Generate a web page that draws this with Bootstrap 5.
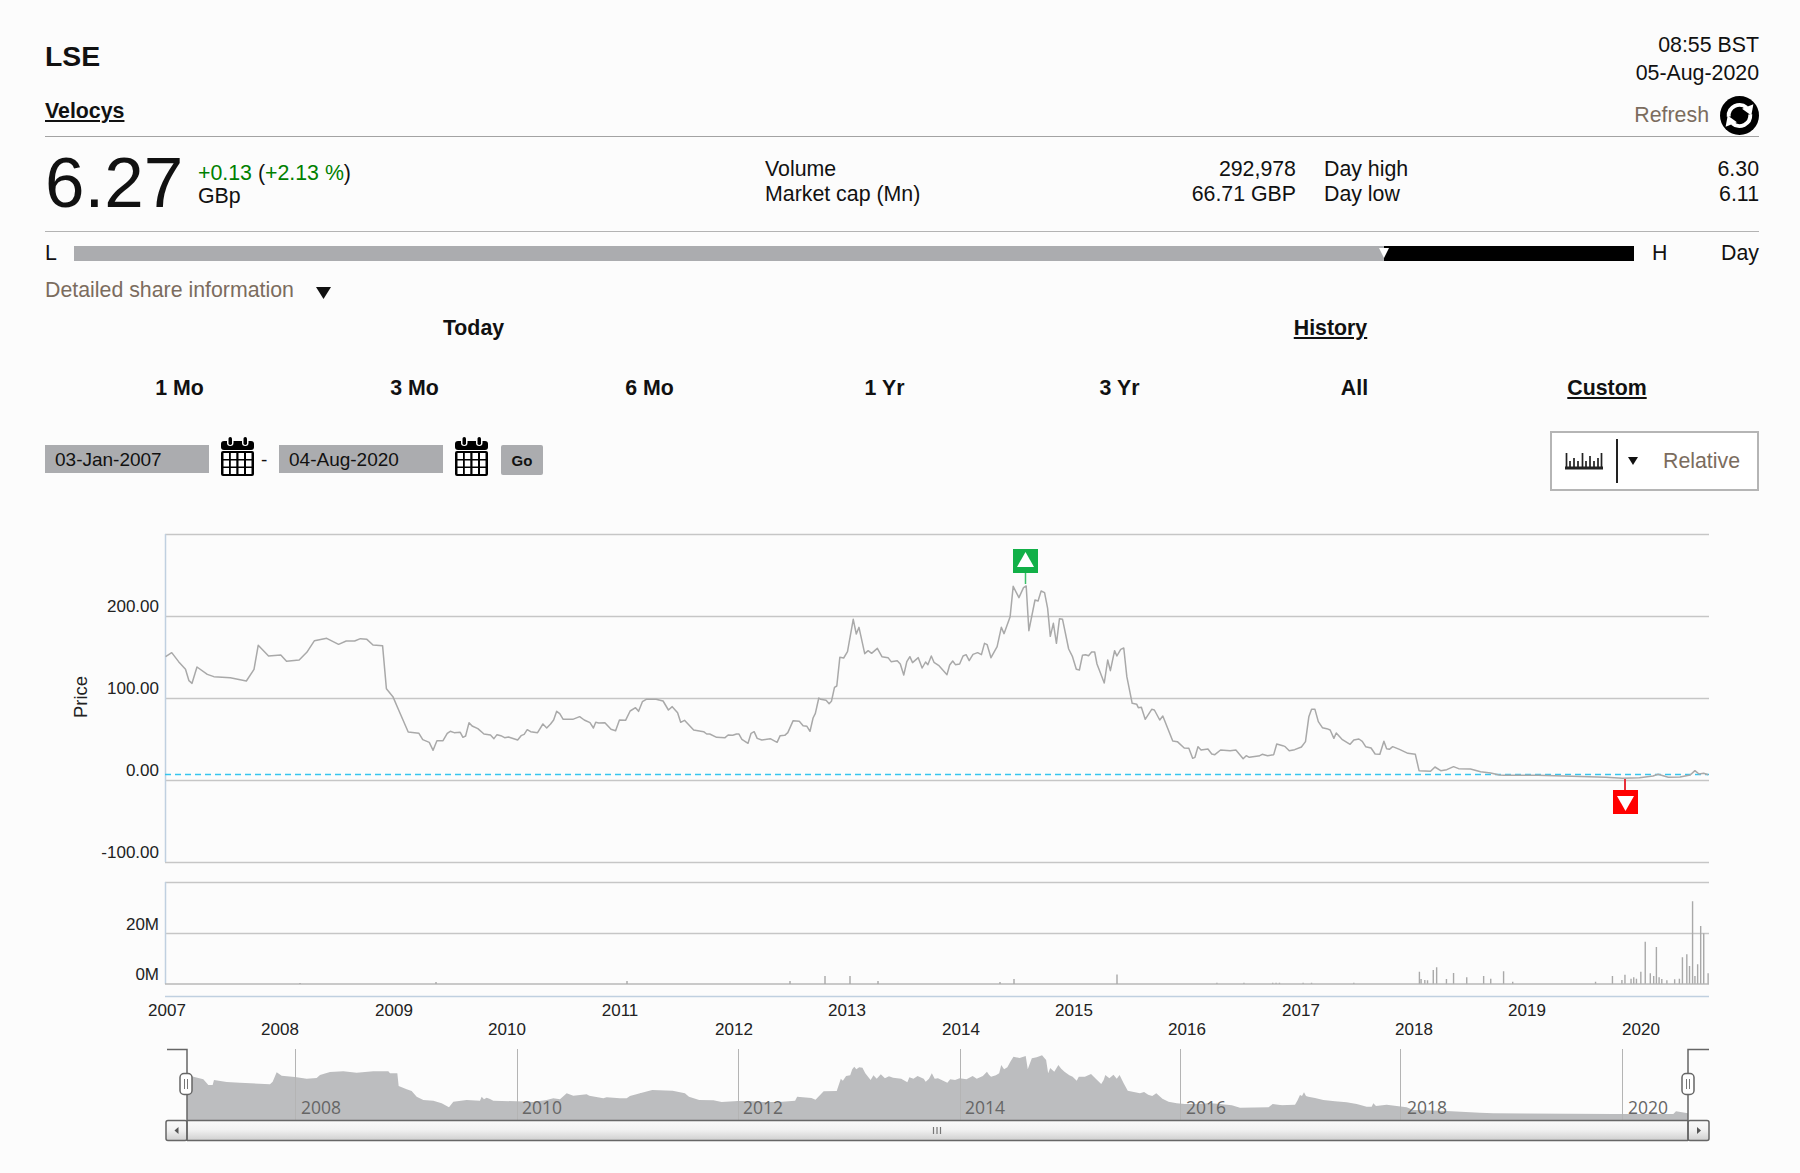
<!DOCTYPE html>
<html lang="en">
<head>
<meta charset="utf-8">
<title>LSE Velocys</title>
<link href="https://cdn.jsdelivr.net/npm/bootstrap@5.3.0/dist/css/bootstrap.min.css" rel="stylesheet">
<style>
html,body{background:#fcfcfc;}
body{font-family:"Liberation Sans",Arial,sans-serif;font-size:21.33px;color:#111;line-height:28px;overflow:hidden;}
a{color:#111;}
.sheet{width:1800px;height:1173px;padding:0 41px 0 45px;}
.headbar{height:137px;border-bottom:1px solid #a3a3a3;padding-top:31px;}
.exch{font-size:28.4px;font-weight:700;line-height:32px;margin-top:9px;}
.coname{font-weight:700;margin-top:25px;text-decoration:underline;}
.brown{color:#7b6c5e;}
.refresh{height:38px;margin-top:9px;gap:11px;}
.quote{height:95px;border-bottom:1px solid #b3b3b3;}
.bigp{font-size:71px;line-height:71px;letter-spacing:0;margin-top:10px;width:153px;}
.chg{padding-top:25px;line-height:23px;width:567px;}
.up{color:#008000;}
.lab{width:531px;padding-top:20px;line-height:25px;}
.lab2{width:435px;margin-left:28px;padding-top:20px;line-height:25px;}
.rangebar{height:28px;margin-top:7px;}
.lcol{width:29px;}
.track{width:1560px;height:15px;background:#abacaf;position:relative;}
.fillb{position:absolute;right:0;top:0;bottom:0;width:250px;background:#000;}
.marker{position:absolute;right:245px;top:2px;width:10px;height:10px;}
.hcol{margin-left:18px;}
.detail{margin-top:9px;height:28px;}
.detail svg{margin-left:22px;margin-top:5px;}
.tabs1{margin-top:10px;height:28px;font-weight:700;}
.tabs2{margin-top:32px;height:28px;font-weight:700;margin-left:17px;display:grid;grid-template-columns:repeat(6,235px) 270px;}
.dates{margin-top:29px;height:59px;}
.fldd{width:164px;height:28px;background:#abacaf;padding-left:10px;font-size:19px;line-height:30px;margin-top:14px;}
.calg{margin:6px 0 0 12px;}
.dashs{width:25px;padding-left:7px;margin-top:15px;font-size:19px;}
.gob{width:42px;height:30px;margin:14px 0 0 13px;background:#abacaf;border-radius:2px;font-size:15px;font-weight:700;text-align:center;line-height:31px;}
.relbox{width:209px;height:60px;border:2px solid #b5b5b5;background:#fff;}
.relbox .tick{margin-left:13px;}
.relbox .sep{width:2px;height:44px;background:#222;margin-left:13px;}
.relbox .tri{margin-left:10px;}
.relbox .reltxt{margin-left:25px;}
.chartwrap{margin-top:10px;}
.chartwrap svg{display:block;}
.chartwrap text{font-family:"Liberation Sans",Arial,sans-serif;font-size:17px;fill:#222;}
.chartwrap text.nv{font-family:"Open Sans",sans-serif;font-size:17.5px;fill:#666;}
.pline{fill:none;stroke:#a9a9a9;stroke-width:1.5;stroke-linejoin:round;}
.pline,.barz{vector-effect:non-scaling-stroke;}
.barz{fill:none;stroke:#a9a9a9;stroke-width:1.4;}
.navfill{fill:#bcbdbf;}
.gridl{stroke:#c6c6c6;stroke-width:1.5;fill:none;}
.axisl{stroke:#c0d0e0;stroke-width:1.5;fill:none;}
.navg{stroke:#b4b4b4;stroke-width:1;fill:none;}
.navb{stroke:#666;stroke-width:1.5;fill:none;}
</style>
</head>
<body>
<div class="sheet">
  <div class="headbar d-flex justify-content-between">
    <div>
      <div class="exch">LSE</div>
      <div class="coname">Velocys</div>
    </div>
    <div class="text-end">
      <div>08:55 BST</div>
      <div>05-Aug-2020</div>
      <div class="refresh d-flex justify-content-end align-items-center">
        <span class="brown">Refresh</span>
        <svg width="39" height="39" viewBox="0 0 38 38" aria-hidden="true">
          <circle cx="19" cy="19" r="19" fill="#000"/>
          <path d="M8.5 20A10.5 10.5 0 0 1 26 11.500" fill="none" stroke="#fff" stroke-width="3.800"/>
          <path d="M32.500 8L30.500 19 21.500 12.500Z" fill="#fff"/>
          <path d="M29.5 18A10.5 10.5 0 0 1 12 26.500" fill="none" stroke="#fff" stroke-width="3.800"/>
          <path d="M5.500 30L7.500 19 16.500 25.500Z" fill="#fff"/>
        </svg>
      </div>
    </div>
  </div>

  <div class="quote d-flex">
    <div class="bigp">6.27</div>
    <div class="chg"><span class="up">+0.13</span> (<span class="up">+2.13 %</span>)<br>GBp</div>
    <div class="lab d-flex justify-content-between">
      <div>Volume<br>Market cap (Mn)</div>
      <div class="text-end">292,978<br>66.71 GBP</div>
    </div>
    <div class="lab2 d-flex justify-content-between">
      <div>Day high<br>Day low</div>
      <div class="text-end">6.30<br>6.11</div>
    </div>
  </div>

  <div class="rangebar d-flex align-items-center">
    <div class="lcol">L</div>
    <div class="track">
      <div class="fillb"></div>
      <svg class="marker" viewBox="0 0 10 10" aria-hidden="true"><path d="M0 0H10L5 10Z" fill="#fff"/></svg>
    </div>
    <div class="hcol">H</div>
    <div class="ms-auto">Day</div>
  </div>

  <div class="detail d-flex align-items-center">
    <span class="brown">Detailed share information</span>
    <svg width="15" height="12" viewBox="0 0 15 12" aria-hidden="true"><path d="M0 0H15L7.500 12Z" fill="#111"/></svg>
  </div>

  <div class="tabs1 row g-0 text-center">
    <div class="col-6">Today</div>
    <div class="col-6"><u>History</u></div>
  </div>
  <div class="tabs2 text-center">
    <div>1 Mo</div><div>3 Mo</div><div>6 Mo</div><div>1 Yr</div><div>3 Yr</div><div>All</div><div><u>Custom</u></div>
  </div>

  <div class="dates d-flex">
    <div class="fldd">03-Jan-2007</div>
    <svg class="calg" width="33" height="39" viewBox="0 0 33 39" aria-hidden="true">
      <use href="#calshape"/>
    </svg>
    <div class="dashs">-</div>
    <div class="fldd">04-Aug-2020</div>
    <svg class="calg" width="33" height="39" viewBox="0 0 33 39" aria-hidden="true">
      <g id="calshape">
        <rect x="0" y="4" width="33" height="9" rx="3" fill="#000"/>
        <rect x="0" y="14" width="33" height="25" rx="2" fill="#000"/>
        <rect x="6" y="-1" width="6.500" height="10" rx="3.200" fill="#fff"/>
        <rect x="21" y="-1" width="6.500" height="10" rx="3.200" fill="#fff"/>
        <rect x="7.500" y="0" width="3.500" height="8" rx="1.700" fill="#000"/>
        <rect x="22.500" y="0" width="3.500" height="8" rx="1.700" fill="#000"/>
        <path fill="#fff" d="M2.500 16h5.500v6H2.500zM9.800 16h5.500v6h-5.500zM17.500 16h5.500v6h-5.500zM25 16h5.500v6h-5.500zM2.500 23.500h5.500v6H2.500zM9.800 23.500h5.500v6h-5.500zM17.500 23.500h5.500v6h-5.500zM25 23.500h5.500v6h-5.500zM2.500 31h5.500v6H2.500zM9.800 31h5.500v6h-5.500zM17.500 31h5.500v6h-5.500zM25 31h5.500v6h-5.500z"/>
      </g>
    </svg>
    <div class="gob">Go</div>
    <div class="relbox ms-auto d-flex align-items-center">
      <svg class="tick" width="38" height="18" viewBox="0 0 38 18" aria-hidden="true">
        <path d="M0 16H38" stroke="#222" stroke-width="3"/>
        <path d="M1.500 16V1M5 16V9M9 16V6M13 16V9M17.500 16V1M21 16V9M25 16V4M29 16V9M33 16V6M36.500 16V1" stroke="#222" stroke-width="1.700" fill="none"/>
      </svg>
      <div class="sep"></div>
      <svg class="tri" width="10" height="8" viewBox="0 0 10 8" aria-hidden="true"><path d="M0 0H10L5 8Z" fill="#111"/></svg>
      <span class="brown reltxt">Relative</span>
    </div>
  </div>

  <div class="chartwrap">
    <svg width="1714" height="673" viewBox="45 500 1714 673" role="img" aria-label="Price chart">
      <defs>
        <linearGradient id="trackg" x1="0" y1="0" x2="0" y2="1"><stop offset="0" stop-color="#fafafa"/><stop offset="0.45" stop-color="#f2f2f2"/><stop offset="1" stop-color="#cfcfcf"/></linearGradient>
      </defs>
      <!-- price panel -->
      <path class="gridl" d="M165 534.500H1709M165 616.500H1709M165 698.500H1709M165 780.500H1709M165 862.500H1709"/>
      <path class="axisl" d="M165.500 534V862"/>
      <path d="M165 774.500H1709" stroke="#35c5ee" stroke-width="1.300" stroke-dasharray="6 4" fill="none"/>
      <g transform="translate(60,520) scale(.38265,.33333)">
        <polyline class="pline" points="276,410 292,398 310,425 328,448 337,482 345,490 358,441 385,463 402,470 445,473 487,483 507,448 518,376 545,408 577,405 592,424 625,420 645,397 665,362 697,355 728,373 748,363 770,363 785,356 802,358 818,375 843,377 853,506 870,530 885,570 910,636 938,640 948,659 965,667 975,691 985,662 1001,662 1012,640 1020,634 1030,638 1046,637 1053,652 1060,648 1069,608 1077,618 1092,626 1108,642 1125,645 1134,656 1142,644 1152,647 1162,653 1172,651 1196,660 1205,647 1213,643 1221,629 1230,635 1248,638 1262,612 1272,624 1282,612 1290,600 1298,574 1306,581 1315,598 1340,598 1358,590 1370,600 1385,608 1394,624 1400,607 1408,609 1424,608 1440,628 1452,632 1462,600 1478,601 1490,573 1504,563 1512,574 1522,545 1532,538 1558,538 1568,541"/>
      </g>
      <g transform="translate(660,520) scale(.38265,.33333)">
        <polyline class="pline" points="0,541 8,543 22,570 32,560 46,578 54,607 64,601 88,630 114,635 122,642 130,642 148,652 170,653 178,645 190,646 200,642 206,642 214,658 230,670 238,640 246,635 254,655 266,660 288,656 306,667 314,647 326,646 334,638 348,602 364,604 374,617 384,619 392,634 400,594 406,580 415,534 420,538 434,541 442,551 448,544 456,502 462,498 470,412 480,414 490,395 505,298 513,342 520,322 535,401 544,392 553,400 568,385 580,410 596,413 604,425 620,422 628,432 637,465 645,425 653,410 660,428 675,413 685,444 694,426 700,434 709,408 716,427 728,436 750,464 757,435 765,423 772,434 783,432 792,408 800,404 808,422 818,403 830,398 840,404 848,370 855,374 865,413 881,380 892,322 899,341 915,290 923,199 938,233 950,203 957,198 964,332 980,240 988,243 996,213 1005,218 1013,265 1020,349 1028,310 1036,370 1044,296 1052,298 1068,387 1078,410 1088,448 1096,450 1104,406 1112,404 1120,407 1128,396 1136,396 1142,432 1161,489 1170,420 1177,452 1188,392 1194,408 1204,388 1212,384 1220,470 1234,550 1246,553 1250,563 1258,562 1268,598 1285,568 1292,570 1306,600 1314,588 1340,663 1352,665 1370,684 1382,685 1392,715 1398,712 1406,680 1414,690 1432,687 1442,702 1450,704 1465,690 1490,692 1505,690 1524,716 1532,707 1540,712 1568,707"/>
      </g>
      <g transform="translate(1200,680) scale(.33807,.33333)">
        <polyline class="pline" points="177,227 184,223 200,227 218,224 227,192 245,197 252,200 264,212 280,209 300,201 312,185 322,110 330,88 340,88 350,125 362,143 375,146 385,150 396,175 403,159 420,178 444,193 455,180 470,177 480,184 490,200 506,204 518,222 532,223 544,184 552,206 560,208 570,200 590,208 615,220 637,223 648,272 682,274 695,261 712,272 730,269 750,260 765,266 800,267 830,275 860,279 885,285 900,286 1000,286 1100,289 1200,292 1250,295 1300,293 1340,288 1355,283 1385,292 1420,291 1450,285 1464,272 1476,282 1490,280 1503,284"/>
      </g>
      <!-- flags -->
      <path d="M1025.500 573V584" stroke="#3cc06a" stroke-width="1.500"/>
      <rect x="1013" y="549" width="25" height="24" fill="#12b048"/>
      <path d="M1025.500 552L1034 567H1017Z" fill="#fff"/>
      <path d="M1625 779V790" stroke="#e8303a" stroke-width="2"/>
      <rect x="1613" y="790" width="25" height="24" fill="#ff0000"/>
      <path d="M1625.500 811L1634 796H1617Z" fill="#fff"/>
      <!-- axis labels -->
      <g text-anchor="end">
        <text x="159" y="612">200.00</text>
        <text x="159" y="694">100.00</text>
        <text x="159" y="776">0.00</text>
        <text x="159" y="858">-100.00</text>
        <text x="159" y="930">20M</text>
        <text x="159" y="980">0M</text>
      </g>
      <text x="87" y="697" text-anchor="middle" transform="rotate(-90 87 697)" style="font-size:18.500px">Price</text>
      <!-- volume panel -->
      <path class="gridl" d="M165 882.500H1709M165 933.500H1709"/>
      <path class="axisl" d="M165.500 882V984"/>
      <path d="M165 984H1709" stroke="#b9b9b9" stroke-width="1.500"/>
      <path d="M165 996.500H1709" stroke="#c0d0e0" stroke-width="1.500"/>
      <path class="barz" d="M825 984V976M850 984V976M878 984V981M790 984V981M627 984V981M1014 984V979M1117 984V974.500M436 984V982M300 984V983M1000 984V982"/>
      <g transform="translate(1200,680) scale(.33807,.33333)">
        <path class="barz" d="M649 911V875M654 911V897M665 911V900M673 911V901M690 911V870M700 911V862M729 911V897M750 911V879M789 911V892M839 911V888M860 911V896M898 911V874M925 911V905M1220 911V888M1248 911V900M1257 911V884M1275 911V896M1283 911V892M1291 911V896M1304 911V875M1317 911V785M1332 911V880M1342 911V888M1350 911V801M1358 911V892M1366 911V897M1381 911V901M1404 911V898M1418 911V896M1427 911V832M1440 911V823M1448 911V858M1457 911V664M1464 911V888M1472 911V853M1481 911V738M1490 911V760M1503 911V880M50 911V908M130 911V908M215 911V908M225 911V908M235 911V908M305 911V908M330 911V908M455 911V908M1170 911V905"/>
      </g>
      <!-- x labels -->
      <g text-anchor="middle">
        <text x="167" y="1016">2007</text><text x="394" y="1016">2009</text><text x="620" y="1016">2011</text><text x="847" y="1016">2013</text><text x="1074" y="1016">2015</text><text x="1301" y="1016">2017</text><text x="1527" y="1016">2019</text>
        <text x="280" y="1035">2008</text><text x="507" y="1035">2010</text><text x="734" y="1035">2012</text><text x="961" y="1035">2014</text><text x="1187" y="1035">2016</text><text x="1414" y="1035">2018</text><text x="1641" y="1035">2020</text>
      </g>
      <!-- navigator -->
      <g transform="translate(140,1030) scale(.33333)">
        <polygon class="navfill" points="141,270 141,130 146,132 160,140 190,148 205,165 218,165 222,150 260,156 300,158 390,163 398,155 410,127 425,137 465,141 500,146 530,144 540,135 570,126 610,124 650,128 700,124 745,124 750,130 772,130 776,168 800,178 815,183 830,200 850,210 880,212 905,220 927,232 940,215 980,210 1020,212 1025,200 1032,208 1040,203 1050,207 1060,212 1130,214 1180,216 1220,210 1240,205 1260,208 1280,190 1300,197 1340,193 1348,197 1390,205 1400,202 1440,205 1460,205 1470,198 1500,190 1505,190 1505,270"/>
      </g>
      <g transform="translate(640,1030) scale(.40816,.33333)">
        <polygon class="navfill" points="0,270 0,190 30,180 80,182 110,190 120,200 145,210 180,211 200,216 240,213 270,213 300,216 340,216 380,212 385,200 420,204 430,209 450,184 482,183 492,146 497,152 505,138 515,136 520,118 525,110 530,118 537,112 545,113 552,130 565,150 572,136 580,146 590,133 600,145 610,139 620,143 640,146 655,157 660,142 670,146 680,138 695,146 700,155 708,146 715,130 722,146 730,145 753,158 760,148 772,150 783,145 800,148 815,138 825,146 840,138 850,125 855,134 860,140 872,136 880,130 885,105 892,118 900,112 908,94 915,80 930,84 945,78 950,118 960,85 972,82 985,76 995,90 1000,130 1005,114 1015,125 1025,105 1032,116 1040,125 1052,136 1060,140 1070,152 1075,140 1090,140 1105,132 1118,148 1130,162 1136,150 1140,135 1150,145 1160,134 1168,146 1175,135 1185,160 1195,182 1210,186 1225,190 1235,186 1245,194 1255,198 1265,190 1280,206 1295,215 1315,220 1335,222 1360,222 1400,220 1450,226 1470,233 1540,232 1550,222 1568,225 1572,226 1572,270"/>
      </g>
      <g transform="translate(1280,1030) scale(.33333)">
        <polygon class="navfill" points="0,270 0,226 45,224 52,212 60,195 66,198 72,187 78,198 85,200 105,204 130,210 165,214 200,217 230,222 260,230 275,230 280,220 288,228 320,224 380,232 400,240 500,243 600,248 640,250 1000,252 1180,252 1188,244 1224,250 1224,270"/>
      </g>
      <path class="navg" d="M295.500 1049V1120M517.500 1049V1120M738.500 1049V1120M960.500 1049V1120M1180.500 1049V1120M1400.500 1049V1120M1622.500 1049V1120"/>
      <g>
        <text class="nv" x="301" y="1114">2008</text><text class="nv" x="522" y="1114">2010</text><text class="nv" x="743" y="1114">2012</text><text class="nv" x="965" y="1114">2014</text><text class="nv" x="1186" y="1114">2016</text><text class="nv" x="1407" y="1114">2018</text><text class="nv" x="1628" y="1114">2020</text>
      </g>
      <!-- scrollbar -->
      <rect x="187" y="1120.500" width="1501" height="20" fill="url(#trackg)"/>
      <path class="navb" d="M187 1120.500H1688M187 1140.500H1688"/>
      <rect x="166" y="1120.500" width="21" height="20" rx="2" fill="url(#trackg)" stroke="#666" stroke-width="1.500"/>
      <rect x="1688" y="1120.500" width="21" height="20" rx="2" fill="url(#trackg)" stroke="#666" stroke-width="1.500"/>
      <path d="M178.500 1127V1134L174.500 1130.500Z" fill="#555"/>
      <path d="M1697 1127V1134L1701 1130.500Z" fill="#555"/>
      <path d="M933.500 1127V1134M937 1127V1134M940.500 1127V1134" stroke="#777" stroke-width="1.200"/>
      <!-- handles -->
      <path class="navb" d="M167 1049.500H187V1141"/>
      <path class="navb" d="M1709 1049.500H1688V1141"/>
      <rect x="180" y="1073.500" width="12" height="21" rx="4" fill="#fff" stroke="#666" stroke-width="1.500"/>
      <rect x="1682" y="1073.500" width="12" height="21" rx="4" fill="#fff" stroke="#666" stroke-width="1.500"/>
      <path d="M184.500 1079V1089M187.500 1079V1089M1686.500 1079V1089M1689.500 1079V1089" stroke="#777" stroke-width="1"/>
    </svg>
  </div>
</div>
<script src="https://cdn.jsdelivr.net/npm/bootstrap@5.3.0/dist/js/bootstrap.bundle.min.js"></script>
</body>
</html>
